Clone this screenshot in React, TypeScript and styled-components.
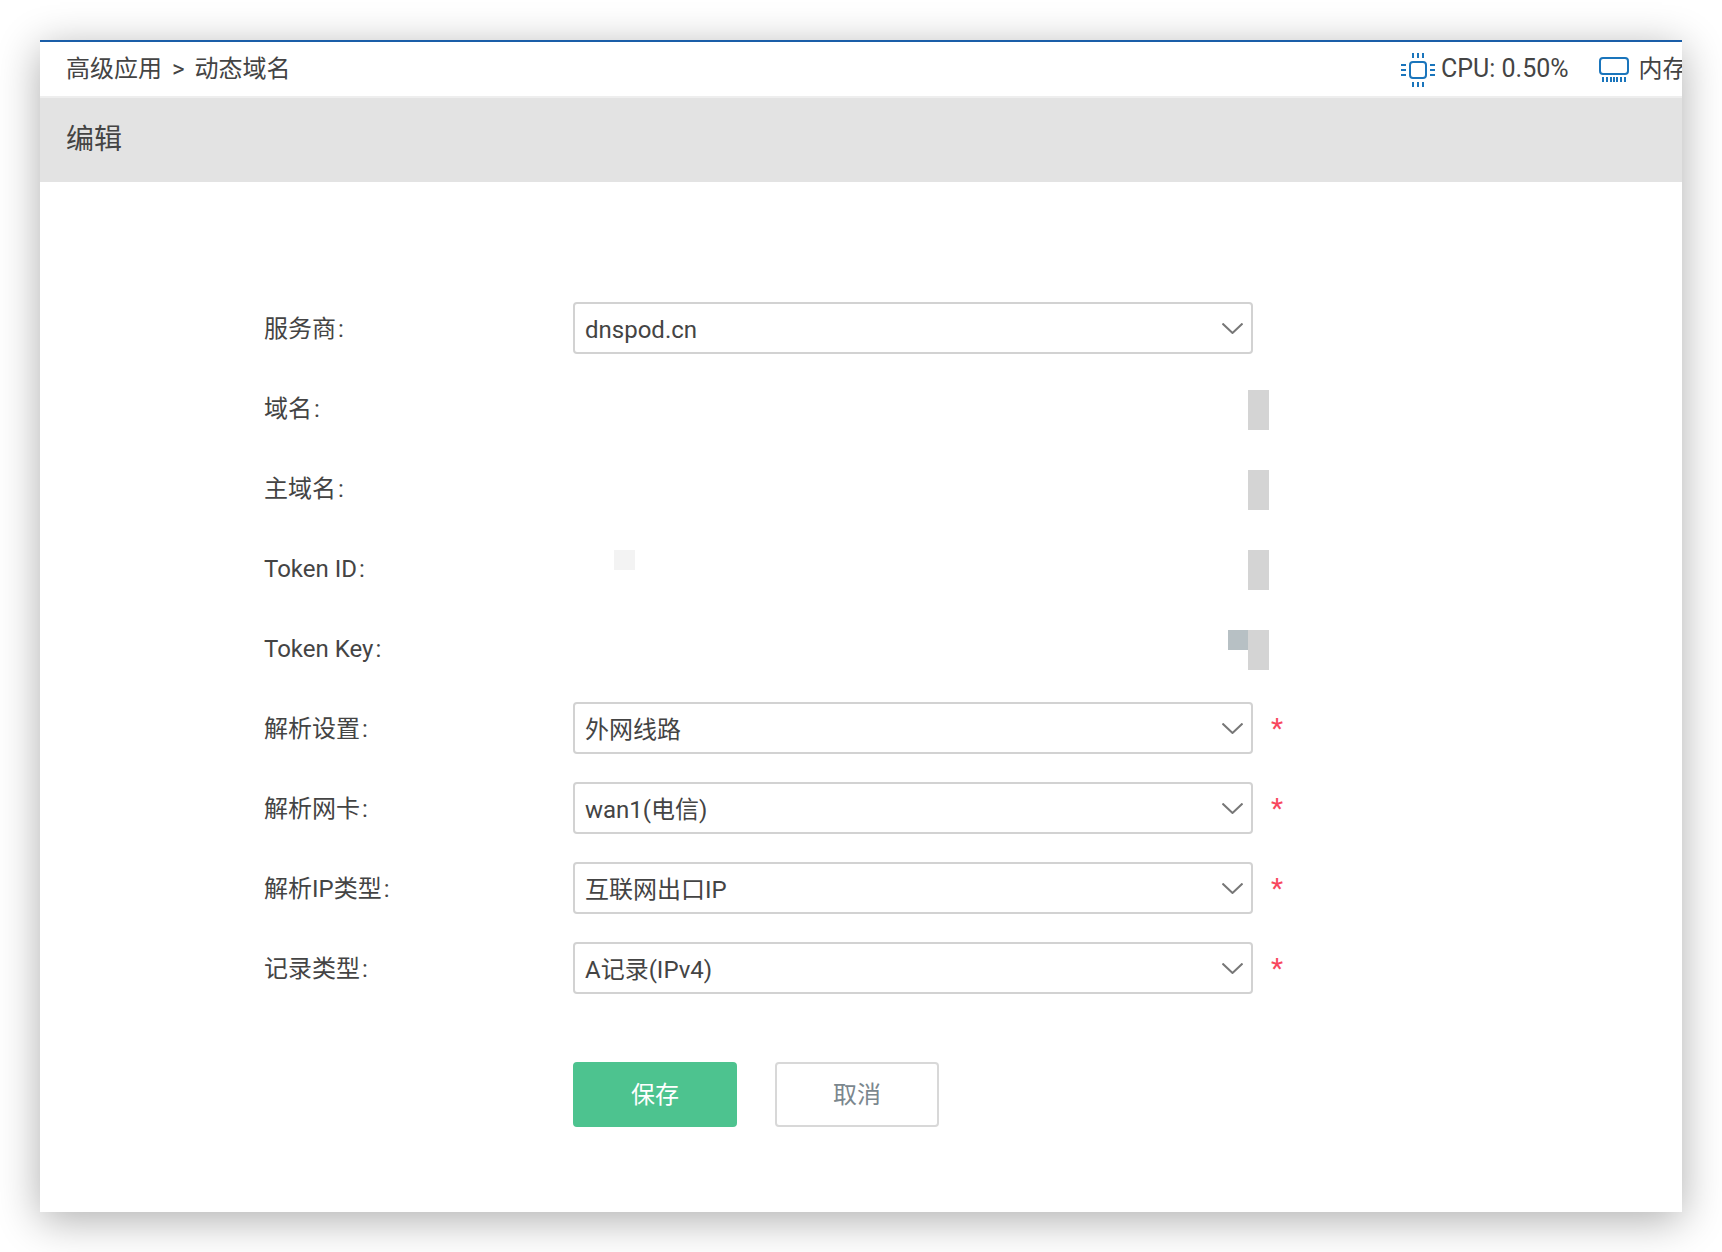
import React from "react";
import styled, { createGlobalStyle } from "styled-components";

const Global = createGlobalStyle`
  html, body { margin: 0; padding: 0; background: #fff; }
  body { font-family: Roboto, "Noto Sans CJK SC", sans-serif; color: #444; line-height: 30px; }
  * { box-sizing: border-box; }
`;

const Page = styled.div`
  width: 1722px;
  height: 1252px;
  padding: 40px;
  overflow: hidden;
`;

const Panel = styled.main`
  width: 1642px;
  height: 1172px;
  background: #fff;
  border-top: 2px solid #1a5ea8;
  box-shadow: 0 8px 40px rgba(0, 0, 0, 0.32);
`;

const TopBar = styled.header`
  height: 56px;
  display: flex;
  align-items: center;
  padding: 2px 0 0 26px;
  border-bottom: 2px solid #eeeeee;
  overflow: hidden;
  font-size: 24px;
  white-space: nowrap;
`;

const Breadcrumb = styled.div`
  flex: 0 0 1335px;
  padding-bottom: 2px;
`;

const Separator = styled.span`
  margin: 0 10px;
`;

const Stat = styled.div<{ $gap: number }>`
  flex: none;
  display: flex;
  align-items: center;
  margin-right: ${(p) => p.$gap}px;
`;

const CpuText = styled.span`
  font-size: 25px;
  padding-bottom: 2px;
`;

const MemoryText = styled.span`
  padding-bottom: 2px;
`;

const StatIcon = styled.svg<{ $gap: number }>`
  flex: none;
  display: block;
  margin-right: ${(p) => p.$gap}px;
`;

const TitleBar = styled.div`
  height: 84px;
  display: flex;
  align-items: center;
  padding-left: 26px;
  background: #e3e3e3;
  font-size: 28px;
`;

const Form = styled.form`
  padding: 120px 0 0 224px;
  display: flex;
  flex-direction: column;
  gap: 28px;
`;

const Row = styled.div`
  position: relative;
  height: 52px;
  display: flex;
  align-items: center;
`;

const Label = styled.label`
  flex: 0 0 309px;
  padding-top: 1px;
  font-size: 24px;
`;

const Colon = styled.span`
  margin-left: 2px;
`;

const Select = styled.div`
  width: 680px;
  height: 52px;
  display: flex;
  align-items: center;
  justify-content: space-between;
  padding: 0 8px 0 10px;
  border: 2px solid #d2d2d2;
  border-radius: 4px;
  background: #fff;
  font-size: 24px;
`;

const SelectValue = styled.span`
  padding-top: 4px;
`;

const Chevron = styled.svg`
  flex: none;
  display: block;
`;

const Required = styled.span`
  margin: 2px 0 0 18px;
  color: #f8485e;
  font-size: 28px;
  line-height: 1;
`;

const Mosaic = styled.i<{ $left: number; $top: number; $w: number; $h: number; $color: string }>`
  position: absolute;
  left: ${(p) => p.$left}px;
  top: ${(p) => p.$top}px;
  width: ${(p) => p.$w}px;
  height: ${(p) => p.$h}px;
  background: ${(p) => p.$color};
`;

const Actions = styled.div`
  display: flex;
  gap: 38px;
  margin: 40px 0 0 309px;
`;

const Button = styled.button<{ $primary?: boolean }>`
  width: 164px;
  height: 65px;
  padding: 0;
  border: 2px solid ${(p) => (p.$primary ? "#4dc38f" : "#d8d8d8")};
  border-radius: 4px;
  background: ${(p) => (p.$primary ? "#4dc38f" : "#fff")};
  color: ${(p) => (p.$primary ? "#fff" : "#7b878e")};
  font: inherit;
  font-size: 24px;
`;

const CpuIcon = () => (
  <StatIcon $gap={6} width="34" height="34" viewBox="0 0 34 34" fill="none" stroke="#1a75bc" strokeWidth="2">
    <rect x="9" y="9" width="16" height="16" rx="3" />
    <path d="M12 0v5M17 0v5M22 0v5M12 29v5M17 29v5M22 29v5M0 12h5M0 17h5M0 22h5M29 12h5M29 17h5M29 22h5" />
  </StatIcon>
);

const MemoryIcon = () => (
  <StatIcon $gap={10} width="30" height="26" viewBox="0 0 30 26" fill="none" stroke="#1a75bc" strokeWidth="2">
    <rect x="1" y="1" width="28" height="16" rx="3" />
    <path d="M4 20v5M8 20v5M12 20v5M15 20v5M18 20v5M22 20v5M26 20v5" />
  </StatIcon>
);

const Arrow = () => (
  <Chevron width="21" height="11" viewBox="0 0 21 11" fill="none" stroke="#777" strokeWidth="2">
    <path d="M0.5 0.5 10.5 10 20.5 0.5" />
  </Chevron>
);

type Field = { label: string; value?: string; required?: boolean; masks?: [number, number, number, number, string][] };

const GREY = "#d4d4d4";
const tall = (): [number, number, number, number, string] => [984, 8, 21, 40, GREY];

const fields: Field[] = [
  { label: "服务商", value: "dnspod.cn" },
  { label: "域名", masks: [tall()] },
  { label: "主域名", masks: [tall()] },
  { label: "Token ID", masks: [[350, 8, 21, 20, "#f3f3f3"], tall()] },
  { label: "Token Key", masks: [[964, 8, 20, 20, "#b7c0c4"], tall()] },
  { label: "解析设置", value: "外网线路", required: true },
  { label: "解析网卡", value: "wan1(电信)", required: true },
  { label: "解析IP类型", value: "互联网出口IP", required: true },
  { label: "记录类型", value: "A记录(IPv4)", required: true },
];

export default function App() {
  return (
    <Page>
      <Global />
      <Panel>
        <TopBar>
          <Breadcrumb>高级应用<Separator>&gt;</Separator>动态域名</Breadcrumb>
          <Stat $gap={30}>
            <CpuIcon />
            <CpuText>CPU: 0.50%</CpuText>
          </Stat>
          <Stat $gap={0}>
            <MemoryIcon />
            <MemoryText>内存</MemoryText>
          </Stat>
        </TopBar>
        <TitleBar>编辑</TitleBar>
        <Form>
          {fields.map((f) => (
            <Row key={f.label}>
              <Label>{f.label}<Colon>:</Colon></Label>
              {f.value && (
                <Select>
                  <SelectValue>{f.value}</SelectValue>
                  <Arrow />
                </Select>
              )}
              {f.required && <Required>*</Required>}
              {f.masks?.map(([l, t, w, h, c]) => (
                <Mosaic key={l} $left={l} $top={t} $w={w} $h={h} $color={c} />
              ))}
            </Row>
          ))}
          <Actions>
            <Button type="button" $primary>保存</Button>
            <Button type="button">取消</Button>
          </Actions>
        </Form>
      </Panel>
    </Page>
  );
}
